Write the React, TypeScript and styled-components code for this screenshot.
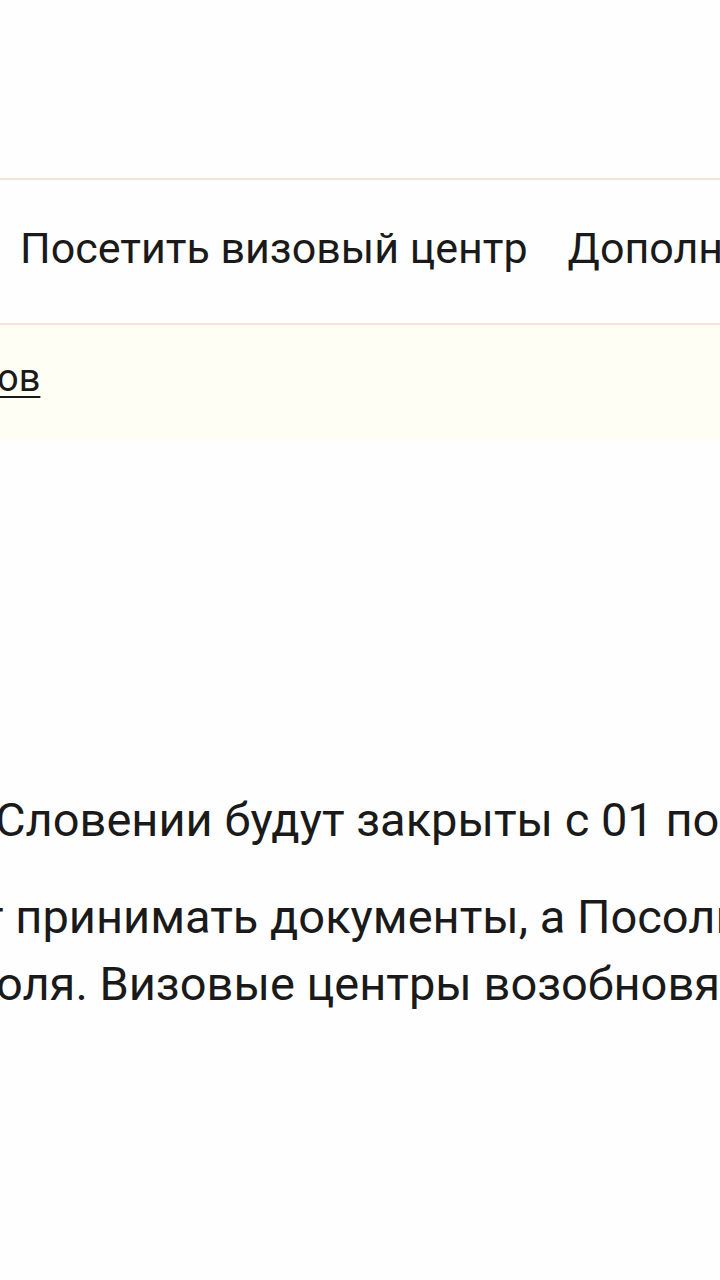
import styled, { createGlobalStyle } from "styled-components";

const GlobalStyle = createGlobalStyle`
  html, body {
    margin: 0;
    padding: 0;
    background: #fefefe;
  }
  body {
    font-family: Roboto, "Noto Sans", "Liberation Sans", sans-serif;
    color: #1a1a1a;
    overflow: hidden;
  }
`;

const Page = styled.div`
  width: 720px;
  height: 1280px;
  overflow: hidden;
  display: flex;
  flex-direction: column;
`;

const TopSpace = styled.div`
  height: 178px;
  flex-shrink: 0;
  background: #fefefe;
`;

const NavBar = styled.nav`
  height: 143px;
  flex-shrink: 0;
  display: flex;
  align-items: center;
  gap: 40px;
  padding-left: 20px;
  border-top: 2px solid #f4e3d5;
  border-bottom: 2px solid #f4e3d5;
  background: #fefefe;
  white-space: nowrap;
  overflow: hidden;
`;

const NavLink = styled.a`
  font-size: 43px;
  color: #1a1a1a;
  text-decoration: none;
  flex-shrink: 0;
  padding-bottom: 8px;
`;

const Crumbs = styled.div`
  height: 115px;
  flex-shrink: 0;
  background: #fffef4;
  display: flex;
  align-items: center;
  white-space: nowrap;
  overflow: hidden;
`;

const CrumbLink = styled.a<{ $shift: number }>`
  font-size: 38px;
  color: #1a1a1a;
  text-decoration: underline;
  text-decoration-thickness: 2px;
  text-underline-offset: 5px;
  margin-left: ${(p) => p.$shift}px;
  padding-bottom: 10px;
`;

const Content = styled.main`
  padding-top: 346px;
  display: flex;
  flex-direction: column;
  gap: 30px;
`;

const Paragraph = styled.div`
  display: flex;
  flex-direction: column;
`;

const Line = styled.div<{ $shift: number }>`
  font-size: 47px;
  line-height: 67px;
  white-space: nowrap;
  margin-left: ${(p) => p.$shift}px;
  color: #1a1a1a;
`;

export default function App() {
  return (
    <Page>
      <GlobalStyle />
      <TopSpace />
      <NavBar>
        <NavLink href="#">Посетить визовый центр</NavLink>
        <NavLink href="#">Дополнительные услуги</NavLink>
      </NavBar>
      <Crumbs>
        <CrumbLink href="#" $shift={-3}>ов</CrumbLink>
      </Crumbs>
      <Content>
        <Paragraph>
          <Line $shift={-5}>Словении будут закрыты с 01 по 15 мая</Line>
        </Paragraph>
        <Paragraph>
          <Line $shift={-19}>т принимать документы, а Посольство</Line>
          <Line $shift={-4}>оля. Визовые центры возобновят работу</Line>
        </Paragraph>
      </Content>
    </Page>
  );
}
